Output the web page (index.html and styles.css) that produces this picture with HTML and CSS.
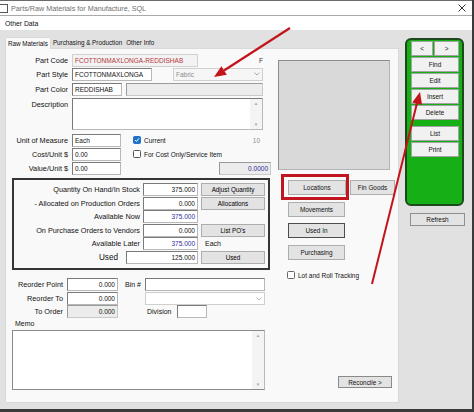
FILE: index.html
```html
<!DOCTYPE html>
<html lang="en">
<head>
    <meta charset="UTF-8">
    <title>Parts/Raw Materials for Manufacture, SQL</title>
    <link rel="stylesheet" href="styles.css">
</head>
<body>
    <div class="window">
        <div class="titlebar">
            <span class="app-icon"></span>
            <span class="title">Parts/Raw Materials for Manufacture, SQL</span>
            <svg class="close" width="8" height="8" viewBox="0 0 8 8"><path d="M0.5 0.5 L7.5 7.5 M7.5 0.5 L0.5 7.5" stroke="#333" stroke-width="1"/></svg>
        </div>
        <div class="menubar"><span>Other Data</span></div>

        <div class="client">
            <div class="tabs">
                <div class="tab-strip">
                    <span class="tab active">Raw Materials</span>
                    <span class="tab">Purchasing &amp; Production</span>
                    <span class="tab">Other Info</span>
                </div>
                <div class="tab-page">
                    <div class="col-left">
                        <div class="row">
                            <span class="lbl">Part Code</span>
                            <div class="field code w126">FCOTTONMAXLONGA-REDDISHAB</div>
                            <span class="flag">F</span>
                        </div>
                        <div class="row">
                            <span class="lbl">Part Style</span>
                            <div class="field w80">FCOTTONMAXLONGA</div>
                            <div class="field combo style-combo">Fabric
                                <svg class="chev" width="6" height="4" viewBox="0 0 6 4"><path d="M0.5 0.5 L3 3 L5.5 0.5" fill="none" stroke="#999" stroke-width="0.8"/></svg>
                            </div>
                        </div>
                        <div class="row gap1">
                            <span class="lbl">Part Color</span>
                            <div class="field w50">REDDISHAB</div>
                            <div class="field shaded color-name"></div>
                        </div>
                        <div class="row desc-row">
                            <span class="lbl top">Description</span>
                            <div class="textbox desc">
                                <div class="vscroll"><span>&#9650;</span><span>&#9660;</span></div>
                            </div>
                        </div>
                        <div class="row gap3">
                            <span class="lbl">Unit of Measure</span>
                            <div class="field w49">Each</div>
                            <span class="check checked"><svg width="6" height="6" viewBox="0 0 6 6"><path d="M1 3 L2.5 4.5 L5 1.3" fill="none" stroke="#fff" stroke-width="1"/></svg></span>
                            <span class="check-text">Current</span>
                            <span class="count">10</span>
                        </div>
                        <div class="row">
                            <span class="lbl">Cost/Unit $</span>
                            <div class="field w49">0.00</div>
                            <span class="check"></span>
                            <span class="check-text">For Cost Only/Service Item</span>
                        </div>
                        <div class="row">
                            <span class="lbl">Value/Unit $</span>
                            <div class="field w49">0.00</div>
                            <div class="field shaded num blue value-total">0.0000</div>
                        </div>

                        <div class="qty-box">
                            <div class="qrow h14">
                                <span class="qlbl">Quantity On Hand/In Stock</span>
                                <div class="field num w55">375.000</div>
                                <button class="qbtn">Adjust Quantity</button>
                            </div>
                            <div class="qrow h14">
                                <span class="qlbl">- Allocated on Production Orders</span>
                                <div class="field num w55">0.000</div>
                                <button class="qbtn">Allocations</button>
                            </div>
                            <div class="qrow h13">
                                <span class="qlbl">Available Now</span>
                                <div class="field num blue w55">375.000</div>
                            </div>
                            <div class="qrow h14">
                                <span class="qlbl">On Purchase Orders to Vendors</span>
                                <div class="field num w55">0.000</div>
                                <button class="qbtn">List PO's</button>
                            </div>
                            <div class="qrow h13">
                                <span class="qlbl">Available Later</span>
                                <div class="field num blue w55">375.000</div>
                                <span class="unit">Each</span>
                            </div>
                            <div class="qrow h14">
                                <span class="qlbl used-lbl">Used</span>
                                <div class="field num w72">125.000</div>
                                <button class="qbtn">Used</button>
                            </div>
                        </div>

                        <div class="row lower first">
                            <span class="lbl short">Reorder Point</span>
                            <div class="field num w51">0.000</div>
                            <span class="bin-lbl">Bin #</span>
                            <div class="field w120"></div>
                        </div>
                        <div class="row lower h13">
                            <span class="lbl short">Reorder To</span>
                            <div class="field num w51">0.000</div>
                            <div class="field combo bin-combo">
                                <svg class="chev" width="6" height="4" viewBox="0 0 6 4"><path d="M0.5 0.5 L3 3 L5.5 0.5" fill="none" stroke="#aaa" stroke-width="0.8"/></svg>
                            </div>
                        </div>
                        <div class="row lower h13 flush">
                            <span class="lbl short">To Order</span>
                            <div class="field num shaded w51">0.000</div>
                            <span class="div-lbl">Division</span>
                            <div class="field w30"></div>
                        </div>
                        <div class="memo-lbl">Memo</div>
                        <div class="textbox memo">
                            <div class="vscroll"><span>&#9650;</span><span>&#9660;</span></div>
                        </div>
                    </div>

                    <div class="col-right">
                        <div class="picture"></div>
                        <div class="action-row">
                            <div class="highlight">
                                <button class="btn locations">Locations</button>
                            </div>
                            <button class="btn fin-goods">Fin Goods</button>
                        </div>
                        <button class="btn side-btn movements">Movements</button>
                        <button class="btn side-btn used-in">Used In</button>
                        <button class="btn side-btn purchasing">Purchasing</button>
                        <div class="lot-row">
                            <span class="check"></span>
                            <span class="check-text">Lot and Roll Tracking</span>
                        </div>
                        <button class="btn reconcile">Reconcile &gt;</button>
                    </div>
                </div>
            </div>

            <div class="side">
                <div class="nav-panel">
                    <div class="nav-arrows">
                        <button class="nbtn prev">&lt;</button>
                        <button class="nbtn next">&gt;</button>
                    </div>
                    <button class="nbtn">Find</button>
                    <button class="nbtn">Edit</button>
                    <button class="nbtn">Insert</button>
                    <button class="nbtn">Delete</button>
                    <button class="nbtn list">List</button>
                    <button class="nbtn">Print</button>
                </div>
                <button class="btn refresh">Refresh</button>
            </div>
        </div>
    </div>

    <svg class="arrows" width="474" height="412" viewBox="0 0 474 412">
        <line x1="290" y1="28" x2="224" y2="70.5" stroke="#c3141c" stroke-width="2.2"/>
        <polygon points="214,77 226.8,74.7 221.4,66.3" fill="#c3141c"/>
        <line x1="372" y1="284" x2="417" y2="103" stroke="#c3141c" stroke-width="2"/>
        <polygon points="420,92 422,104.8 412.2,102.4" fill="#c3141c"/>
    </svg>
</body>
</html>
```

FILE: styles.css
```css
* {
    box-sizing: border-box;
}
body {
    margin: 0;
    width: 474px;
    height: 412px;
    background-color: #3a3a3a;
    font-family: "Liberation Sans", Arial, sans-serif;
    color: #111;
    position: relative;
    overflow: hidden;
}
.window {
    width: 472px;
    height: 409px;
    background-color: #e1e1e1;
    border-top: 1px solid #6b6b6b;
    display: flex;
    flex-direction: column;
}
.titlebar {
    height: 15px;
    background-color: #fff;
    border-bottom: 1px solid #a9a9a9;
    display: flex;
    align-items: center;
}
.app-icon {
    width: 9px;
    height: 9px;
    border: 1px solid #555;
    margin-left: -1px;
}
.title {
    margin-left: 3px;
    font-size: 7.2px;
    color: #6e6e6e;
}
.close {
    margin-left: auto;
    margin-right: 6px;
}
.menubar {
    height: 14px;
    background-color: #fff;
    padding-left: 5px;
    font-size: 6.8px;
    display: flex;
    align-items: center;
}
.client {
    flex: 1;
    display: flex;
    padding: 7px 0 6px 5px;
}
.tabs {
    width: 394px;
    display: flex;
    flex-direction: column;
}
.tab-strip {
    height: 11px;
    display: flex;
    align-items: flex-end;
    font-size: 6.3px;
}
.tab {
    padding: 0 2px 2px 2px;
}
.tab.active {
    background-color: #f9f9f9;
    border: 1px solid #d9d9d9;
    border-bottom: none;
    height: 12px;
    margin-bottom: -1px;
    padding-top: 2px;
    position: relative;
}
.tab-page {
    flex: 1;
    background-color: #f9f9f9;
    border: 1px solid #d9d9d9;
    display: flex;
    padding-top: 4px;
}

/* left column */
.col-left {
    width: 266px;
}
.row {
    display: flex;
    align-items: center;
    height: 14px;
}
.row.gap1 { margin-top: 1px; }
.row.gap3 { margin-top: 3px; }
.row.h13 { height: 13px; }
.lbl {
    width: 62px;
    margin-right: 4px;
    text-align: right;
    font-size: 7.3px;
    white-space: nowrap;
}
.lbl.top {
    align-self: flex-start;
    padding-top: 2px;
}
.lbl.short {
    width: 57px;
}
.field {
    height: 13px;
    background-color: #fff;
    border: 1px solid #b8b8b8;
    border-top-color: #7a7a7a;
    border-left-color: #7a7a7a;
    font-size: 6.5px;
    padding: 0 2px;
    display: flex;
    align-items: center;
    white-space: nowrap;
    overflow: hidden;
}
.field.num {
    justify-content: flex-end;
}
.field.shaded {
    background-color: #ececec;
    border-color: #c9c9c9;
    border-left-color: #9a9a9a;
    border-top-color: #9a9a9a;
}
.field.code {
    color: #b3363a;
    background-color: #f3f3f3;
    border-color: #d0d0d0;
}
.blue { color: #2c2c9c; }
.w30 { width: 30px; }
.w49 { width: 49px; }
.w50 { width: 50px; }
.w51 { width: 51px; }
.w55 { width: 55px; }
.w72 { width: 72px; }
.w80 { width: 80px; }
.w120 { width: 120px; }
.w126 { width: 126px; }
.flag {
    margin-left: auto;
    margin-right: 9px;
    font-size: 6.5px;
    color: #333;
}
.combo {
    background-color: #f6f6f6;
    border: 1px solid #cfcfcf;
    color: #8c8c8c;
    justify-content: space-between;
}
.style-combo {
    width: 90px;
    margin-left: 21px;
}
.color-name {
    width: 137px;
    margin-left: 4px;
}
.desc-row {
    height: 32px;
    margin-top: 2px;
    align-items: stretch;
}
.textbox {
    background-color: #fff;
    border: 1px solid #b8b8b8;
    border-top-color: #7a7a7a;
    border-left-color: #7a7a7a;
    display: flex;
    justify-content: flex-end;
}
.desc {
    width: 191px;
}
.vscroll {
    width: 12px;
    background-color: #f4f4f4;
    display: flex;
    flex-direction: column;
    justify-content: space-between;
    align-items: center;
    font-size: 4.5px;
    color: #a8a8a8;
    padding: 2px 0;
}
.check {
    width: 8px;
    height: 8px;
    border: 1px solid #555;
    border-radius: 1.5px;
    background-color: #fff;
    margin-left: 12px;
    display: flex;
    align-items: center;
    justify-content: center;
}
.check.checked {
    background-color: #1f72c8;
    border-color: #1f72c8;
}
.check-text {
    margin-left: 3px;
    font-size: 6.5px;
    white-space: nowrap;
}
.count {
    margin-left: auto;
    margin-right: 12px;
    font-size: 6.5px;
    color: #8c8c8c;
}
.value-total {
    width: 52px;
    margin-left: auto;
    margin-right: 1px;
}

/* quantity block */
.qty-box {
    margin: 3px 0 0 6px;
    width: 258px;
    height: 92px;
    border: 2px solid #363636;
    padding-top: 2px;
}
.qrow {
    display: flex;
    align-items: center;
}
.qrow.h14 { height: 14px; }
.qrow.h13 { height: 13px; }
.qlbl {
    width: 126px;
    margin-right: 3px;
    text-align: right;
    font-size: 7.3px;
    white-space: nowrap;
}
.used-lbl {
    width: 104px;
    margin-right: 8px;
    font-size: 8.2px;
}
.qbtn {
    width: 64px;
    height: 13px;
    margin-left: 3px;
    background-color: #e3e3e3;
    border: 1px solid #adadad;
    font-family: inherit;
    font-size: 6.3px;
    padding: 0;
}
.unit {
    margin-left: 7px;
    font-size: 7px;
}

/* reorder block */
.lower.first {
    margin-top: 7px;
}
.lower.h13 {
    margin-top: 1px;
}
.lower.flush {
    margin-top: 0;
}
.bin-lbl {
    width: 20px;
    margin-left: 7px;
    font-size: 7px;
}
.bin-combo {
    width: 120px;
    margin-left: 27px;
    background-color: #fff;
    justify-content: flex-end;
}
.div-lbl {
    width: 30px;
    margin-left: 29px;
    font-size: 7px;
}
.memo-lbl {
    height: 12px;
    margin-left: 9px;
    padding-top: 2px;
    font-size: 7px;
}
.memo {
    width: 253px;
    height: 60px;
    margin-left: 6px;
    border-color: #8a8a8a;
    border-right-color: #b8b8b8;
}

/* right column */
.col-right {
    width: 120px;
    margin-left: 6px;
    display: flex;
    flex-direction: column;
    align-items: flex-start;
    padding-bottom: 14px;
}
.picture {
    width: 112px;
    height: 110px;
    margin-top: 7px;
    background-color: #d9d9d9;
    border: 1px solid #b3b3b3;
    border-top-color: #8c8c8c;
    border-left-color: #8c8c8c;
}
.btn {
    height: 15px;
    background-color: #e3e3e3;
    border: 1px solid #adadad;
    font-family: inherit;
    font-size: 6.4px;
    color: #111;
    padding: 0;
}
.action-row {
    display: flex;
    align-items: flex-start;
    margin-top: 4px;
}
.highlight {
    margin-left: 3px;
    border: 3px solid #c1161f;
    padding: 3px 0 2px 4px;
}
.locations {
    width: 58px;
    display: block;
}
.fin-goods {
    width: 45px;
    margin: 6px 0 0 1px;
}
.side-btn {
    width: 57px;
    margin-left: 10px;
}
.movements { margin-top: 2px; }
.used-in {
    margin-top: 6px;
    border-color: #4d4d4d;
}
.purchasing { margin-top: 7px; }
.lot-row {
    display: flex;
    align-items: center;
    margin-top: 11px;
}
.lot-row .check {
    margin-left: 9px;
    border-color: #666;
}
.reconcile {
    width: 54px;
    height: 12px;
    margin: auto 0 0 60px;
    border-color: #8a8a8a;
}

/* navigation panel */
.side {
    width: 60px;
    margin-left: 6px;
    display: flex;
    flex-direction: column;
    align-items: flex-start;
}
.nav-panel {
    width: 59px;
    height: 168px;
    margin-top: 1px;
    background-color: #16b016;
    border: 2px solid #1d4a1d;
    border-radius: 6px;
    padding: 1px 0 0 4px;
    display: flex;
    flex-direction: column;
}
.nav-arrows {
    display: flex;
}
.nbtn {
    width: 48px;
    height: 15px;
    margin-top: 1px;
    background-color: #f1f1f1;
    border: 1px solid #a3a3a3;
    font-family: inherit;
    font-size: 6.4px;
    color: #111;
    padding: 0;
}
.nav-arrows .nbtn {
    margin-top: 0;
}
.prev { width: 22px; }
.next {
    width: 25px;
    margin-left: 1px;
}
.list { margin-top: 6px; }
.refresh {
    width: 55px;
    height: 13px;
    margin: 7px 0 0 5px;
    border-color: #8f8f8f;
}

.arrows {
    position: absolute;
    top: 0;
    left: 0;
    pointer-events: none;
}
```
